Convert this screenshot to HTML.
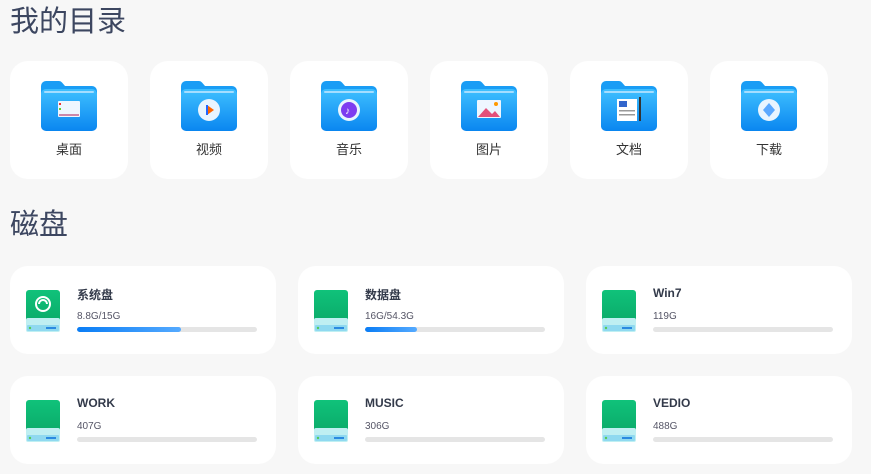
<!DOCTYPE html>
<html><head><meta charset="utf-8"><style>
body{margin:0;width:871px;height:474px;background:#f7f7f7;font-family:"Liberation Sans","Noto Sans CJK SC",sans-serif;position:relative;overflow:hidden}
.h{position:absolute;left:10px;font-size:29px;color:#3c4660;line-height:1}
.t{position:absolute;top:61px;width:118px;height:118px;background:#fff;border-radius:18px}
.t svg{position:absolute;left:31px;top:20px}
.t span{position:absolute;top:78px;width:100%;text-align:center;font-size:13px;color:#333}
.c{position:absolute;width:266px;height:88px;background:#fff;border-radius:18px}
.c svg{position:absolute;left:16px;top:24px}
.c b{position:absolute;left:67px;top:20px;font-size:12px;color:#333a4a}
.c i{position:absolute;left:67px;top:45px;font-size:10px;color:#556;font-style:normal}
.bar{position:absolute;left:67px;top:61px;width:180px;height:5px;border-radius:3px;background:#e5e5e5;overflow:hidden}
.bar div{height:100%;background:linear-gradient(90deg,#0a7df5,#55aaff);border-radius:3px}
</style></head><body>
<div class="h" style="top:8px">我的目录</div>
<div class="h" style="top:211px">磁盘</div>

<svg width="0" height="0" style="position:absolute"><defs>
<linearGradient id="fg" x1="0" y1="0" x2="0" y2="1"><stop offset="0" stop-color="#3fc0ff"/><stop offset="1" stop-color="#0a86f0"/></linearGradient>
<linearGradient id="dg" x1="0" y1="0" x2="0" y2="1"><stop offset="0" stop-color="#10c27a"/><stop offset="1" stop-color="#0aa868"/></linearGradient>
<symbol id="folder" viewBox="0 0 56 50"><path d="M5 0h13a4 4 0 0 1 3 1.5l3 3.5h27a5 5 0 0 1 5 5v10H0V5a5 5 0 0 1 5-5z" fill="#1a9df5"/><rect x="0" y="8" width="56" height="42" rx="5" fill="url(#fg)"/><rect x="3" y="10" width="50" height="2" rx="1" fill="#bfe6ff" opacity=".8"/></symbol>
<symbol id="disk" viewBox="0 0 34 42"><rect x="0" y="0" width="34" height="36" rx="3" fill="url(#dg)"/><rect x="0" y="28" width="34" height="14" rx="2" fill="#bfeff2"/><rect x="1" y="35" width="32" height="6" rx="1" fill="#8fd9f0"/><circle cx="4" cy="38" r="1.2" fill="#5c5"/><rect x="20" y="37" width="10" height="2" fill="#2a8ae0"/></symbol>
</defs></svg>

<div class="t" style="left:10px"><svg width="56" height="50"><use href="#folder"/><rect x="17" y="20" width="22" height="16" rx="1" fill="#eef6ff"/><rect x="18" y="22" width="2" height="2" fill="#e33"/><rect x="18" y="27" width="2" height="2" fill="#6c3"/><rect x="18" y="33" width="20" height="2" fill="#c8a"/></svg><span>桌面</span></div>
<div class="t" style="left:150px"><svg width="56" height="50"><use href="#folder"/><circle cx="28" cy="29" r="11" fill="#e8f4ff"/><path d="M26 24v10l7-5z" fill="#f60"/><rect x="25" y="24" width="2" height="10" fill="#26f"/></svg><span>视频</span></div>
<div class="t" style="left:290px"><svg width="56" height="50"><use href="#folder"/><circle cx="28" cy="29" r="11" fill="#e8f4ff"/><circle cx="28" cy="29" r="8" fill="#7d3cf0"/><text x="24" y="33" font-size="10" fill="#fff">♪</text></svg><span>音乐</span></div>
<div class="t" style="left:430px"><svg width="56" height="50"><use href="#folder"/><rect x="16" y="19" width="24" height="18" rx="1" fill="#eef6ff"/><path d="M17 36l8-9 6 6 3-3 5 6z" fill="#e4507a"/><circle cx="35" cy="23" r="2" fill="#f90"/></svg><span>图片</span></div>
<div class="t" style="left:570px"><svg width="56" height="50"><use href="#folder"/><rect x="16" y="18" width="20" height="22" fill="#fff"/><rect x="18" y="20" width="8" height="6" fill="#36c"/><rect x="18" y="29" width="16" height="1.5" fill="#999"/><rect x="18" y="33" width="16" height="1.5" fill="#999"/><rect x="38" y="16" width="2" height="24" fill="#333"/></svg><span>文档</span></div>
<div class="t" style="left:710px"><svg width="56" height="50"><use href="#folder"/><circle cx="28" cy="29" r="11" fill="#e8f4ff"/><path d="M28 22l6 7-6 7-6-7z" fill="#5aa8ff"/></svg><span>下载</span></div>

<div class="c" style="left:10px;top:266px"><svg width="34" height="42"><use href="#disk"/><circle cx="17" cy="14" r="7" fill="none" stroke="#fff" stroke-width="2"/><path d="M13 14a4 4 0 0 1 8 0" fill="none" stroke="#fff" stroke-width="2"/></svg><b>系统盘</b><i>8.8G/15G</i><div class="bar"><div style="width:58%"></div></div></div>
<div class="c" style="left:298px;top:266px"><svg width="34" height="42"><use href="#disk"/></svg><b>数据盘</b><i>16G/54.3G</i><div class="bar"><div style="width:29%"></div></div></div>
<div class="c" style="left:586px;top:266px"><svg width="34" height="42"><use href="#disk"/></svg><b>Win7</b><i>119G</i><div class="bar"></div></div>
<div class="c" style="left:10px;top:376px"><svg width="34" height="42"><use href="#disk"/></svg><b>WORK</b><i>407G</i><div class="bar"></div></div>
<div class="c" style="left:298px;top:376px"><svg width="34" height="42"><use href="#disk"/></svg><b>MUSIC</b><i>306G</i><div class="bar"></div></div>
<div class="c" style="left:586px;top:376px"><svg width="34" height="42"><use href="#disk"/></svg><b>VEDIO</b><i>488G</i><div class="bar"></div></div>
</body></html>
